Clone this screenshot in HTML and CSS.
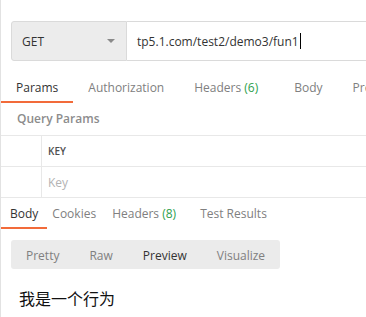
FILE: index.html
```html
<!DOCTYPE html>
<html lang="en">
<head>
  <meta charset="UTF-8" />
  <title>Request</title>
  <link rel="stylesheet" href="styles.css">
</head>
<body>
  <div class="app">
    <!-- Method + URL -->
    <div class="request">
      <div class="method">
        <span>GET</span>
        <span class="caret"></span>
      </div>
      <div class="url"><span class="url-text">tp5.1.com/test2/demo3/fun1</span><span class="cursor"></span></div>
    </div>

    <!-- Request tabs -->
    <div class="tabs req-tabs">
      <div class="tab active">Params</div>
      <div class="tab">Authorization</div>
      <div class="tab">Headers <span class="count">(6)</span></div>
      <div class="tab">Body</div>
      <div class="tab">Pre-request Script</div>
    </div>

    <div class="section-title">Query Params</div>

    <div class="params">
      <div class="row">
        <div class="cell check"></div>
        <div class="cell head">KEY</div>
      </div>
      <div class="row">
        <div class="cell check"></div>
        <div class="cell placeholder">Key</div>
      </div>
    </div>

    <!-- Response tabs -->
    <div class="tabs res-tabs">
      <div class="tab active">Body</div>
      <div class="tab">Cookies</div>
      <div class="tab">Headers <span class="count">(8)</span></div>
      <div class="tab">Test Results</div>
    </div>

    <div class="modes">
      <div class="mode">Pretty</div>
      <div class="mode">Raw</div>
      <div class="mode selected">Preview</div>
      <div class="mode">Visualize</div>
    </div>

    <div class="preview">我是一个行为</div>
  </div>
</body>
</html>
```

FILE: styles.css
```css
* {
  margin: 0;
  padding: 0;
  box-sizing: border-box;
}
body {
  font-family: "Open Sans", Arial, sans-serif;
  font-size: 12px;
  color: #808080;
  background: #fff;
}
.app {
  height: 317px;
  border-left: 1px solid #e2e2e2;
  overflow: hidden;
}

/* REQUEST BAR */
.request {
  display: flex;
  padding: 21px 0 0 10px;
}
.method {
  width: 116px;
  height: 40px;
  flex-shrink: 0;
  display: flex;
  align-items: center;
  justify-content: space-between;
  padding: 0 11px 0 10px;
  background: #ececec;
  border: 1px solid #dadada;
  border-radius: 3px 0 0 3px;
  color: #333;
}
.caret {
  width: 0;
  height: 0;
  border-left: 4px solid transparent;
  border-right: 4px solid transparent;
  border-top: 4px solid #8a8a8a;
}
.url {
  flex: 1;
  min-width: 300px;
  height: 40px;
  display: flex;
  align-items: center;
  padding-left: 10px;
  border: 1px solid #dadada;
  border-left: none;
  color: #333;
}
.cursor {
  width: 1px;
  height: 16px;
  margin-left: 1px;
  background: #000;
}

/* TABS */
.tabs {
  display: flex;
  white-space: nowrap;
}
.tab {
  line-height: 16px;
  border-bottom: 2px solid transparent;
  color: #808080;
}
.tab.active {
  color: #333;
  border-bottom-color: #f26b3a;
}
.count {
  color: #2e9f4e;
}
.req-tabs .tab {
  padding: 19px 15px 5px;
}
.req-tabs .tab:nth-child(3) {
  padding-right: 21px;
}
.res-tabs .tab {
  padding: 8px 9px 5px;
}
.res-tabs .tab:nth-child(2) {
  padding-left: 5px;
  padding-right: 7px;
}
.res-tabs .tab:nth-child(3) {
  padding-right: 15px;
}

.section-title {
  height: 32px;
  line-height: 32px;
  padding-left: 16px;
  font-weight: 600;
  color: #8c8c8c;
}

/* PARAMS TABLE */
.params {
  border-top: 1px solid #e8e8e8;
}
.row {
  display: flex;
  height: 31px;
  border-bottom: 1px solid #e8e8e8;
}
.cell {
  display: flex;
  align-items: center;
}
.check {
  width: 41px;
  border-right: 1px solid #e8e8e8;
}
.head {
  padding-left: 6px;
  font-size: 10px;
  font-weight: 600;
  color: #505050;
}
.placeholder {
  padding-left: 6px;
  color: #b3b3b3;
}

/* RESPONSE MODES */
.modes {
  display: inline-flex;
  margin: 11px 0 0 10px;
  height: 29px;
  background: #ebebeb;
  border-radius: 3px;
}
.mode {
  display: flex;
  align-items: center;
  padding: 1px 15px 0;
  color: #808080;
}
.mode.selected {
  color: #333;
}

.preview {
  padding: 19px 0 0 18px;
  font-family: "Noto Sans CJK SC", sans-serif;
  font-size: 16px;
  line-height: 20px;
  color: #111;
}
```
